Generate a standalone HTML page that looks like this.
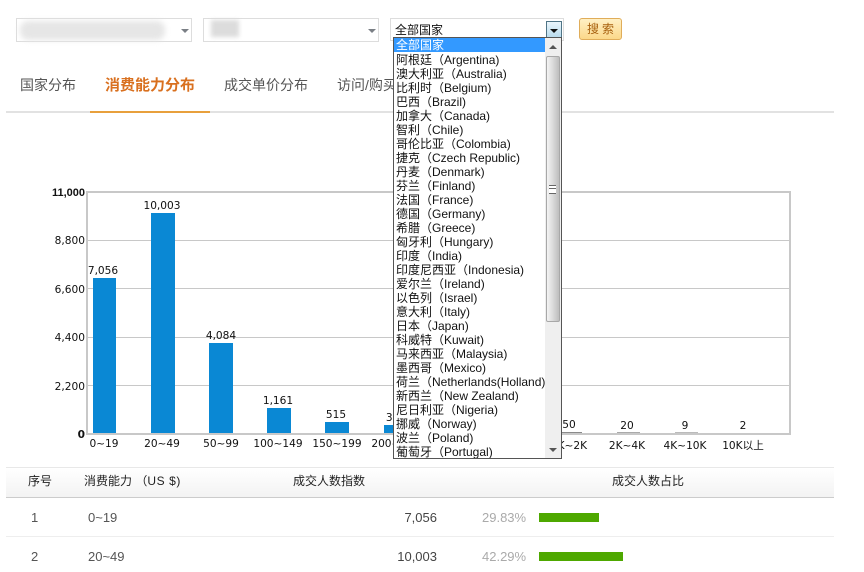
<!DOCTYPE html>
<html lang="zh">
<head>
<meta charset="utf-8">
<style>
html,body{margin:0;padding:0;background:#fff}
body{width:864px;height:572px;overflow:hidden;position:relative;font-family:"Liberation Sans","Noto Sans CJK SC",sans-serif;color:#333}
.a{position:absolute;white-space:nowrap}
.sel{position:absolute;box-sizing:border-box;height:24px;top:18px;border:1px solid #ddd;background:#fff}
.tri{position:absolute;width:0;height:0;border-left:4px solid transparent;border-right:4px solid transparent;border-top:4px solid #7a7f85;top:29px}
.tab{position:absolute;top:75px;line-height:20px;font-size:14px;color:#555;white-space:nowrap}
#dd{position:absolute;left:393px;top:37px;width:169px;height:422px;box-sizing:border-box;border:1px solid #555;background:#fff;overflow:hidden}
#list{position:absolute;left:0;top:0;width:151px;font-size:12px;line-height:14px;color:#111;white-space:nowrap;overflow:hidden;height:420px}
#list div{height:14px;padding-left:2px;position:relative;top:1px}
#list div.on{background:#3399ff;color:#fff;top:0}
#sb{position:absolute;left:151px;top:0;width:16px;height:420px;background:#efefef}
#th{position:absolute;left:1px;top:18px;width:14px;height:266px;box-sizing:border-box;border:1px solid #a8a8a8;border-radius:2px;background:linear-gradient(90deg,#f4f4f4,#d4d4d4 60%,#bdbdbd)}
</style>
</head>
<body>
<div class="sel" style="left:16px;width:176px"></div>
<div class="a" style="left:20px;top:21px;width:145px;height:19px;background:#e6e6e6;filter:blur(3px);border-radius:8px"></div>
<div class="tri" style="left:181px"></div>
<div class="sel" style="left:203px;width:176px"></div>
<div class="a" style="left:211px;top:20px;width:28px;height:17px;background:#dcdcdc;filter:blur(2px)"></div>
<div class="tri" style="left:368px"></div>
<div class="sel" style="left:390px;width:174px;height:23px"></div>
<div class="a" style="left:395px;top:23px;font-size:12px;line-height:14px;color:#111">全部国家</div>
<div class="a" style="left:546px;top:21px;width:16px;height:17px;box-sizing:border-box;border:1px solid #4f7486;background:linear-gradient(#eaf5fb,#b9dcee)"></div>
<div class="a" style="left:550px;top:29px;width:0;height:0;border-left:4px solid transparent;border-right:4px solid transparent;border-top:4px solid #111"></div>
<div class="a" style="left:579px;top:18px;width:43px;height:22px;box-sizing:border-box;border:1px solid #e0ad5a;border-radius:3px;background:linear-gradient(#fff0c4,#fbd88a);font-size:12px;line-height:20px;text-align:center;color:#a8610f;letter-spacing:3px;text-indent:3px">搜索</div>

<div class="tab" style="left:20px">国家分布</div>
<div class="tab" style="left:105px;top:76px;font-size:15px;font-weight:bold;color:#d9701f">消费能力分布</div>
<div class="tab" style="left:224px">成交单价分布</div>
<div class="tab" style="left:337px">访问/购买行为</div>
<div class="a" style="left:6px;top:111px;width:828px;height:2px;background:#e2e2e2"></div>
<div class="a" style="left:90px;top:111px;width:120px;height:2px;background:#e8a03c"></div>

<svg class="a" style="left:0;top:0" width="864" height="470" xmlns="http://www.w3.org/2000/svg">
<g stroke="#c8c8c8" stroke-width="1">
<line x1="87" y1="240.5" x2="790" y2="240.5"/><line x1="87" y1="288.5" x2="790" y2="288.5"/><line x1="87" y1="337.5" x2="790" y2="337.5"/><line x1="87" y1="385.5" x2="790" y2="385.5"/>
</g>
<rect x="87" y="192" width="703" height="242" fill="none" stroke="#c8c8c8" stroke-width="2"/>
<g fill="#0a88d4">
<rect x="93" y="278" width="23" height="155"/><rect x="151" y="213" width="24" height="220"/><rect x="209" y="343" width="24" height="90"/><rect x="267" y="408" width="24" height="25"/><rect x="325" y="422" width="24" height="11"/><rect x="384" y="425" width="24" height="8"/>
</g>
<rect x="558" y="432" width="24" height="1" fill="#8a8a8a"/><rect x="617" y="432" width="23" height="1" fill="#aaa"/><rect x="675" y="432" width="23" height="1" fill="#bbb"/>
<g font-family="'DejaVu Sans','Noto Sans CJK SC',sans-serif" font-size="10.6" fill="#111">
<g text-anchor="end">
<text x="85" y="196" font-weight="bold" font-family="'Liberation Sans',sans-serif" font-size="11">11,000</text>
<text x="85" y="244">8,800</text><text x="85" y="293">6,600</text><text x="85" y="341">4,400</text><text x="85" y="390">2,200</text>
<text x="85" y="438" font-weight="bold">0</text>
</g>
<g text-anchor="middle">
<text x="103" y="274">7,056</text><text x="162" y="209">10,003</text><text x="221" y="339">4,084</text><text x="278" y="404">1,161</text><text x="336" y="418">515</text><text x="396" y="421">385</text>
<text x="569" y="428">50</text><text x="627" y="429">20</text><text x="685" y="429">9</text><text x="743" y="429">2</text>
<text x="104" y="447">0~19</text><text x="162" y="447">20~49</text><text x="221" y="447">50~99</text><text x="278" y="447">100~149</text><text x="337" y="447">150~199</text><text x="396" y="447">200~299</text>
<text x="569" y="449">1K~2K</text><text x="627" y="449">2K~4K</text><text x="685" y="449">4K~10K</text><text x="743" y="449">10K以上</text>
</g>
</g>
</svg>

<div id="dd">
<div id="list">
<div class="on">全部国家</div>
<div>阿根廷（Argentina)</div>
<div>澳大利亚（Australia)</div>
<div>比利时（Belgium)</div>
<div>巴西（Brazil)</div>
<div>加拿大（Canada)</div>
<div>智利（Chile)</div>
<div>哥伦比亚（Colombia)</div>
<div>捷克（Czech Republic)</div>
<div>丹麦（Denmark)</div>
<div>芬兰（Finland)</div>
<div>法国（France)</div>
<div>德国（Germany)</div>
<div>希腊（Greece)</div>
<div>匈牙利（Hungary)</div>
<div>印度（India)</div>
<div>印度尼西亚（Indonesia)</div>
<div>爱尔兰（Ireland)</div>
<div>以色列（Israel)</div>
<div>意大利（Italy)</div>
<div>日本（Japan)</div>
<div>科威特（Kuwait)</div>
<div>马来西亚（Malaysia)</div>
<div>墨西哥（Mexico)</div>
<div>荷兰（Netherlands(Holland)</div>
<div>新西兰（New Zealand)</div>
<div>尼日利亚（Nigeria)</div>
<div>挪威（Norway)</div>
<div>波兰（Poland)</div>
<div>葡萄牙（Portugal)</div>
</div>
<div id="sb">
<div class="a" style="left:4px;top:7px;width:0;height:0;border-left:4px solid transparent;border-right:4px solid transparent;border-bottom:4px solid #555"></div>
<div id="th"><div class="a" style="left:2px;top:128px;width:7px;height:7px;border-top:1px solid #666;border-bottom:1px solid #666;background:linear-gradient(#fff 0 2px,#666 2px 3px,#fff 3px)"></div></div>
<div class="a" style="left:4px;top:410px;width:0;height:0;border-left:4px solid transparent;border-right:4px solid transparent;border-top:4px solid #555"></div>
</div>
</div>

<div class="a" style="left:6px;top:467px;width:828px;height:31px;box-sizing:border-box;border-top:1px solid #e8e8e8;border-bottom:1px solid #ccc;background:linear-gradient(#fff,#f3f3f3)"></div>
<div class="a" style="left:28px;top:474px;font-size:12px;line-height:14px;color:#222">序号</div>
<div class="a" style="left:84px;top:474px;font-size:12px;line-height:14px;color:#222">消费能力 （<span style="font-size:12px;letter-spacing:.6px">US $)</span></div>
<div class="a" style="left:293px;top:474px;font-size:12px;line-height:14px;color:#222">成交人数指数</div>
<div class="a" style="left:612px;top:474px;font-size:12px;line-height:14px;color:#222">成交人数占比</div>
<div class="a" style="left:6px;top:536px;width:828px;height:1px;background:#eee"></div>

<div class="a" style="left:31px;top:511px;font-size:13px;line-height:14px;color:#555">1</div>
<div class="a" style="left:88px;top:511px;font-size:13px;line-height:14px;color:#555">0~19</div>
<div class="a" style="left:337px;width:100px;text-align:right;top:511px;font-size:13px;line-height:14px;color:#444">7,056</div>
<div class="a" style="left:482px;top:511px;font-size:13px;line-height:14px;color:#aaa">29.83%</div>
<div class="a" style="left:539px;top:513px;width:60px;height:9px;background:#4ea800"></div>

<div class="a" style="left:31px;top:550px;font-size:13px;line-height:14px;color:#555">2</div>
<div class="a" style="left:88px;top:550px;font-size:13px;line-height:14px;color:#555">20~49</div>
<div class="a" style="left:337px;width:100px;text-align:right;top:550px;font-size:13px;line-height:14px;color:#444">10,003</div>
<div class="a" style="left:482px;top:550px;font-size:13px;line-height:14px;color:#aaa">42.29%</div>
<div class="a" style="left:539px;top:552px;width:84px;height:9px;background:#4ea800"></div>
</body>
</html>
